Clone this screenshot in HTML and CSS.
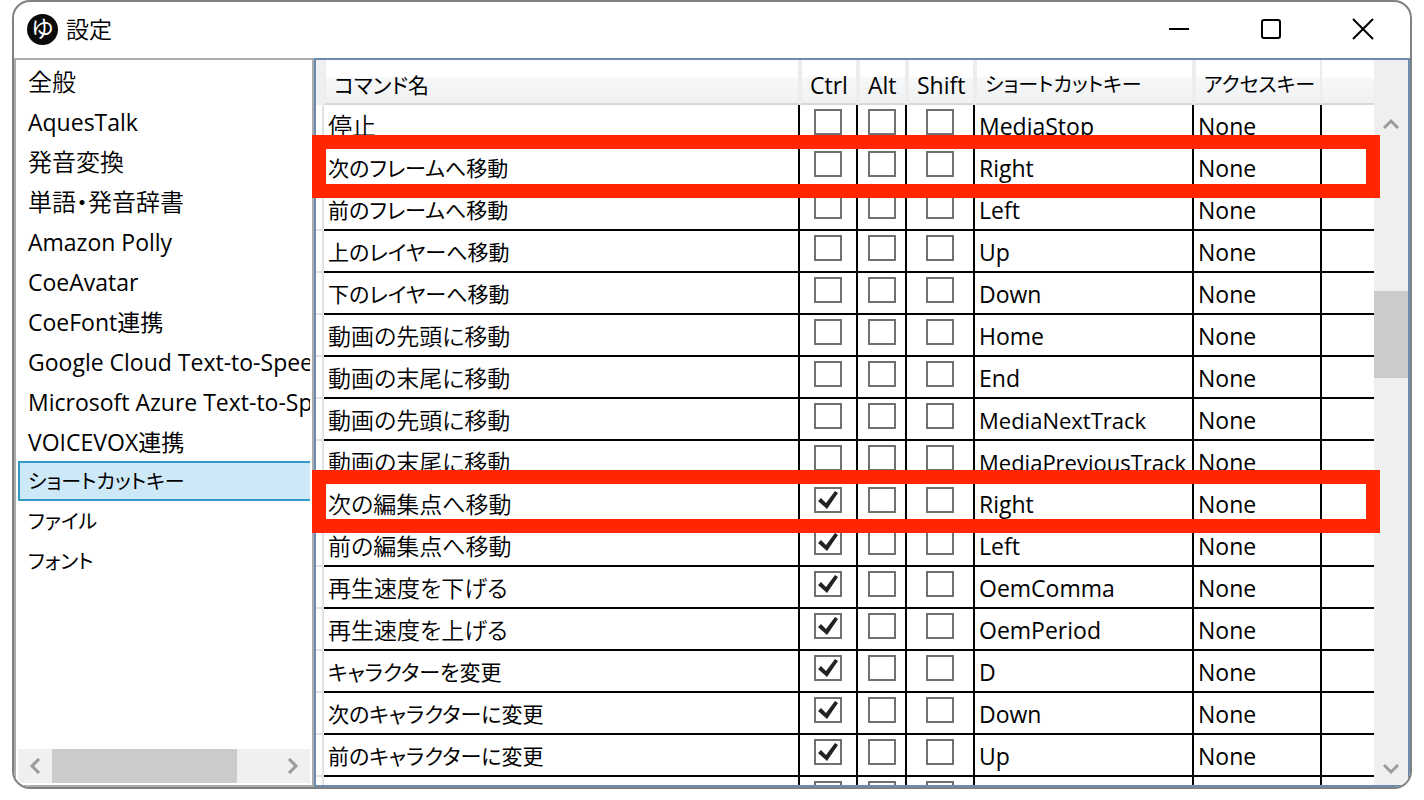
FILE: index.html
```html
<!DOCTYPE html>
<html lang="ja">
<head>
<meta charset="utf-8">
<title>設定</title>
<link rel="stylesheet" href="styles.css">
</head>
<body>
<div class="window">
  <header class="titlebar">
    <span class="logo" aria-hidden="true">ゆ</span>
    <h1 class="title">設定</h1>
    <div class="controls">
      <button type="button" class="control" aria-label="最小化"><svg width="22" height="22" viewBox="0 0 22 22"><path d="M1 11H21"/></svg></button>
      <button type="button" class="control" aria-label="最大化"><svg width="22" height="22" viewBox="0 0 22 22"><rect x="2" y="2" width="18" height="18" rx="2"/></svg></button>
      <button type="button" class="control" aria-label="閉じる"><svg width="22" height="22" viewBox="0 0 22 22"><path d="M1 1L21 21M21 1L1 21"/></svg></button>
    </div>
  </header>
  <div class="content">
    <nav class="sidebar">
      <div class="menu">
        <a class="item kanji" href="#general">全般</a>
        <a class="item" href="#aquestalk">AquesTalk</a>
        <a class="item kanji" href="#pronounce">発音変換</a>
        <a class="item kanji" href="#dictionary">単語・発音辞書</a>
        <a class="item" href="#polly">Amazon Polly</a>
        <a class="item" href="#coeavatar">CoeAvatar</a>
        <a class="item" href="#coefont">CoeFont連携</a>
        <a class="item" href="#google">Google Cloud Text-to-Speech</a>
        <a class="item" href="#azure">Microsoft Azure Text-to-Speech</a>
        <a class="item" href="#voicevox">VOICEVOX連携</a>
        <a class="item kana selected" href="#shortcut" aria-current="page">ショートカットキー</a>
        <a class="item kana" href="#file">ファイル</a>
        <a class="item kana" href="#font">フォント</a>
      </div>
      <div class="hscroll">
        <button type="button" class="arrow" aria-label="左へ"><svg width="16" height="16" viewBox="0 0 16 16"><path d="M12 1L5 8L12 15"/></svg></button>
        <div class="hthumb"></div>
        <div class="hspace"></div>
        <button type="button" class="arrow" aria-label="右へ"><svg width="16" height="16" viewBox="0 0 16 16"><path d="M4 1L11 8L4 15"/></svg></button>
      </div>
    </nav>
    <main class="panel">
      <div class="viewport">
        <table class="grid">
          <colgroup><col class="c-head"><col><col class="c-ctrl"><col class="c-alt"><col class="c-shift"><col class="c-key"><col class="c-access"><col class="c-rest"></colgroup>
          <thead>
            <tr><td class="corner"></td><th class="mixed" scope="col">コマンド名</th><th scope="col">Ctrl</th><th scope="col">Alt</th><th scope="col">Shift</th><th class="kana" scope="col">ショートカットキー</th><th class="kana" scope="col">アクセスキー</th><td class="rest"></td></tr>
          </thead>
          <tbody>
            <tr><td class="rowhead"></td><td class="kanji">停止</td><td class="tick"><input type="checkbox" aria-label="Ctrl"></td><td class="tick"><input type="checkbox" aria-label="Alt"></td><td class="tick"><input type="checkbox" aria-label="Shift"></td><td>MediaStop</td><td>None</td><td></td></tr>
            <tr><td class="rowhead"></td><td class="mixed">次のフレームへ移動</td><td class="tick"><input type="checkbox" aria-label="Ctrl"></td><td class="tick"><input type="checkbox" aria-label="Alt"></td><td class="tick"><input type="checkbox" aria-label="Shift"></td><td>Right</td><td>None</td><td></td></tr>
            <tr><td class="rowhead"></td><td class="mixed">前のフレームへ移動</td><td class="tick"><input type="checkbox" aria-label="Ctrl"></td><td class="tick"><input type="checkbox" aria-label="Alt"></td><td class="tick"><input type="checkbox" aria-label="Shift"></td><td>Left</td><td>None</td><td></td></tr>
            <tr><td class="rowhead"></td><td class="mixed">上のレイヤーへ移動</td><td class="tick"><input type="checkbox" aria-label="Ctrl"></td><td class="tick"><input type="checkbox" aria-label="Alt"></td><td class="tick"><input type="checkbox" aria-label="Shift"></td><td>Up</td><td>None</td><td></td></tr>
            <tr><td class="rowhead"></td><td class="mixed">下のレイヤーへ移動</td><td class="tick"><input type="checkbox" aria-label="Ctrl"></td><td class="tick"><input type="checkbox" aria-label="Alt"></td><td class="tick"><input type="checkbox" aria-label="Shift"></td><td>Down</td><td>None</td><td></td></tr>
            <tr><td class="rowhead"></td><td class="light">動画の先頭に移動</td><td class="tick"><input type="checkbox" aria-label="Ctrl"></td><td class="tick"><input type="checkbox" aria-label="Alt"></td><td class="tick"><input type="checkbox" aria-label="Shift"></td><td>Home</td><td>None</td><td></td></tr>
            <tr><td class="rowhead"></td><td class="light">動画の末尾に移動</td><td class="tick"><input type="checkbox" aria-label="Ctrl"></td><td class="tick"><input type="checkbox" aria-label="Alt"></td><td class="tick"><input type="checkbox" aria-label="Shift"></td><td>End</td><td>None</td><td></td></tr>
            <tr><td class="rowhead"></td><td class="light">動画の先頭に移動</td><td class="tick"><input type="checkbox" aria-label="Ctrl"></td><td class="tick"><input type="checkbox" aria-label="Alt"></td><td class="tick"><input type="checkbox" aria-label="Shift"></td><td class="long">MediaNextTrack</td><td>None</td><td></td></tr>
            <tr><td class="rowhead"></td><td class="light">動画の末尾に移動</td><td class="tick"><input type="checkbox" aria-label="Ctrl"></td><td class="tick"><input type="checkbox" aria-label="Alt"></td><td class="tick"><input type="checkbox" aria-label="Shift"></td><td class="long">MediaPreviousTrack</td><td>None</td><td></td></tr>
            <tr><td class="rowhead"></td><td class="light">次の編集点へ移動</td><td class="tick"><input type="checkbox" aria-label="Ctrl" checked></td><td class="tick"><input type="checkbox" aria-label="Alt"></td><td class="tick"><input type="checkbox" aria-label="Shift"></td><td>Right</td><td>None</td><td></td></tr>
            <tr><td class="rowhead"></td><td class="light">前の編集点へ移動</td><td class="tick"><input type="checkbox" aria-label="Ctrl" checked></td><td class="tick"><input type="checkbox" aria-label="Alt"></td><td class="tick"><input type="checkbox" aria-label="Shift"></td><td>Left</td><td>None</td><td></td></tr>
            <tr><td class="rowhead"></td><td class="light">再生速度を下げる</td><td class="tick"><input type="checkbox" aria-label="Ctrl" checked></td><td class="tick"><input type="checkbox" aria-label="Alt"></td><td class="tick"><input type="checkbox" aria-label="Shift"></td><td>OemComma</td><td>None</td><td></td></tr>
            <tr><td class="rowhead"></td><td class="light">再生速度を上げる</td><td class="tick"><input type="checkbox" aria-label="Ctrl" checked></td><td class="tick"><input type="checkbox" aria-label="Alt"></td><td class="tick"><input type="checkbox" aria-label="Shift"></td><td>OemPeriod</td><td>None</td><td></td></tr>
            <tr><td class="rowhead"></td><td class="mixed">キャラクターを変更</td><td class="tick"><input type="checkbox" aria-label="Ctrl" checked></td><td class="tick"><input type="checkbox" aria-label="Alt"></td><td class="tick"><input type="checkbox" aria-label="Shift"></td><td>D</td><td>None</td><td></td></tr>
            <tr><td class="rowhead"></td><td class="mixed">次のキャラクターに変更</td><td class="tick"><input type="checkbox" aria-label="Ctrl" checked></td><td class="tick"><input type="checkbox" aria-label="Alt"></td><td class="tick"><input type="checkbox" aria-label="Shift"></td><td>Down</td><td>None</td><td></td></tr>
            <tr><td class="rowhead"></td><td class="mixed">前のキャラクターに変更</td><td class="tick"><input type="checkbox" aria-label="Ctrl" checked></td><td class="tick"><input type="checkbox" aria-label="Alt"></td><td class="tick"><input type="checkbox" aria-label="Shift"></td><td>Up</td><td>None</td><td></td></tr>
            <tr><td class="rowhead"></td><td></td><td class="tick"><input type="checkbox" aria-label="Ctrl"></td><td class="tick"><input type="checkbox" aria-label="Alt"></td><td class="tick"><input type="checkbox" aria-label="Shift"></td><td></td><td></td><td></td></tr>
          </tbody>
        </table>
      </div>
      <div class="vscroll">
        <button type="button" class="arrow" aria-label="上へ"><svg width="16" height="16" viewBox="0 0 16 16"><path d="M1 12L8 5L15 12"/></svg></button>
        <div class="vbefore"></div>
        <div class="vthumb"></div>
        <div class="vafter"></div>
        <button type="button" class="arrow" aria-label="下へ"><svg width="16" height="16" viewBox="0 0 16 16"><path d="M1 5L8 12L15 5"/></svg></button>
      </div>
      <div class="mark mark-frame"></div>
      <div class="mark mark-edit"></div>
    </main>
  </div>
</div>
</body>
</html>
```
FILE: styles.css
```css
* { box-sizing: border-box; }

body {
  margin: 0;
  background: #fff;
  color: #000;
  font: 23px/32px "Open Sans", "Noto Sans CJK JP", sans-serif;
  font-weight: 400;
  font-feature-settings: "palt";
}

button {
  display: flex;
  align-items: center;
  justify-content: center;
  padding: 0;
  border: 0;
  background: none;
}

svg { fill: none; stroke: #000; stroke-width: 2; }

.window {
  display: flex;
  flex-direction: column;
  height: calc(100vh - 11px);
  margin: 0 12px;
  border: 2px solid #808080;
  border-radius: 18px;
  overflow: hidden;
}

.titlebar {
  display: flex;
  flex: none;
  align-items: center;
  height: 56px;
  padding: 0 1px 2px 13px;
}

.logo {
  width: 31px;
  height: 31px;
  border-radius: 50%;
  background: #0a0a0a;
  color: #fff;
  font-size: 23px;
  font-weight: 400;
  line-height: 29px;
  text-align: center;
}

.title {
  margin: 0 0 0 8px;
  font-size: 23px;
  font-weight: 350;
}

.controls { display: flex; align-self: stretch; margin-left: auto; }
.control { width: 92px; }

.content { display: flex; flex: 1; min-height: 0; }

.sidebar {
  display: flex;
  flex: none;
  flex-direction: column;
  width: 300px;
  padding: 1px 2px 2px;
  border: 2px solid #a9abae;
}

.menu { flex: 1; min-height: 0; overflow: hidden; }

.item {
  display: block;
  height: 40px;
  padding: 5px 10px 3px;
  overflow: hidden;
  color: #000;
  font-size: 23px;
  text-decoration: none;
  white-space: nowrap;
}

.selected {
  padding: 3px 8px 1px;
  border: 2px solid #3399c8;
  border-right: 0;
  background: #cde8f7;
}

.hscroll { display: flex; flex: none; height: 34px; background: #efefef; }
.arrow { flex: none; width: 34px; height: 34px; }
.arrow svg { stroke: #9b9b9b; stroke-width: 3; }
.hthumb { flex: 185; background: #cbcbcb; }
.hspace { flex: 39; }

.panel {
  display: flex;
  position: relative;
  flex: 1;
  min-width: 0;
  border: 2px solid #6b8cae;
}

.viewport { flex: 1; min-width: 0; overflow: hidden; }

.grid {
  width: 100%;
  border-collapse: separate;
  border-spacing: 0;
  table-layout: fixed;
}

.c-head { width: 8px; }
.c-ctrl { width: 58px; }
.c-alt { width: 49px; }
.c-shift { width: 68px; }
.c-key { width: 219px; }
.c-access { width: 128px; }
.c-rest { width: 52px; }

.grid thead tr { height: 45px; }

.grid th,
.grid .rest {
  padding: 7px 0 0 8px;
  border: 2px solid #ededef;
  border-width: 0 2px 2px;
  border-bottom-color: #d6d8da;
  background: linear-gradient(#fff 40%, #f6f7f8 42%, #f0f1f3);
  font-weight: 400;
  text-align: left;
  white-space: nowrap;
}

.grid .rest { border-width: 0 0 2px; }
.grid .corner { padding: 0; border: 0; background: #eff0f2; }

.grid tbody td {
  height: 42px;
  padding: 5px 0 0 4px;
  border: 2px solid #000;
  border-width: 0 2px 2px 0;
  line-height: 32px;
  vertical-align: top;
  white-space: nowrap;
}

.grid tbody td:last-child { border-right: 0; }

.grid tbody .rowhead {
  padding: 0;
  border-color: #e0e1e6;
}

.grid tbody .tick {
  padding: 4px 0 0;
  line-height: 0;
  text-align: center;
}

.grid .kanji, .menu .kanji { font-size: 24px; font-weight: 350; }
.grid .light { font-size: 23px; font-weight: 350; }
.grid .long { font-size: 22px; }
.grid .mixed { font-size: 21px; }
.grid .kana, .menu .kana { font-size: 20px; }

input {
  width: 28px;
  height: 26px;
  margin: 0;
  border: 2px solid #707070;
  background: #fff;
  appearance: none;
}

input:checked::before {
  display: block;
  width: 24px;
  height: 22px;
  background: #222;
  clip-path: polygon(2px 12px, 5px 9px, 10px 14px, 19px 2px, 22px 4px, 11px 20px);
  content: "";
}

.vscroll {
  display: flex;
  flex: none;
  flex-direction: column;
  width: 34px;
  padding-top: 47px;
  background: #efefef;
}

.vbefore { flex: 150; }
.vthumb { flex: 87; background: #cbcbcb; }
.vafter { flex: 374; }

.mark {
  position: absolute;
  right: 28px;
  left: -4px;
  height: 63px;
  border: 14px solid #ff2600;
}

.mark-frame { top: 75px; }
.mark-edit { top: 410px; }
```
